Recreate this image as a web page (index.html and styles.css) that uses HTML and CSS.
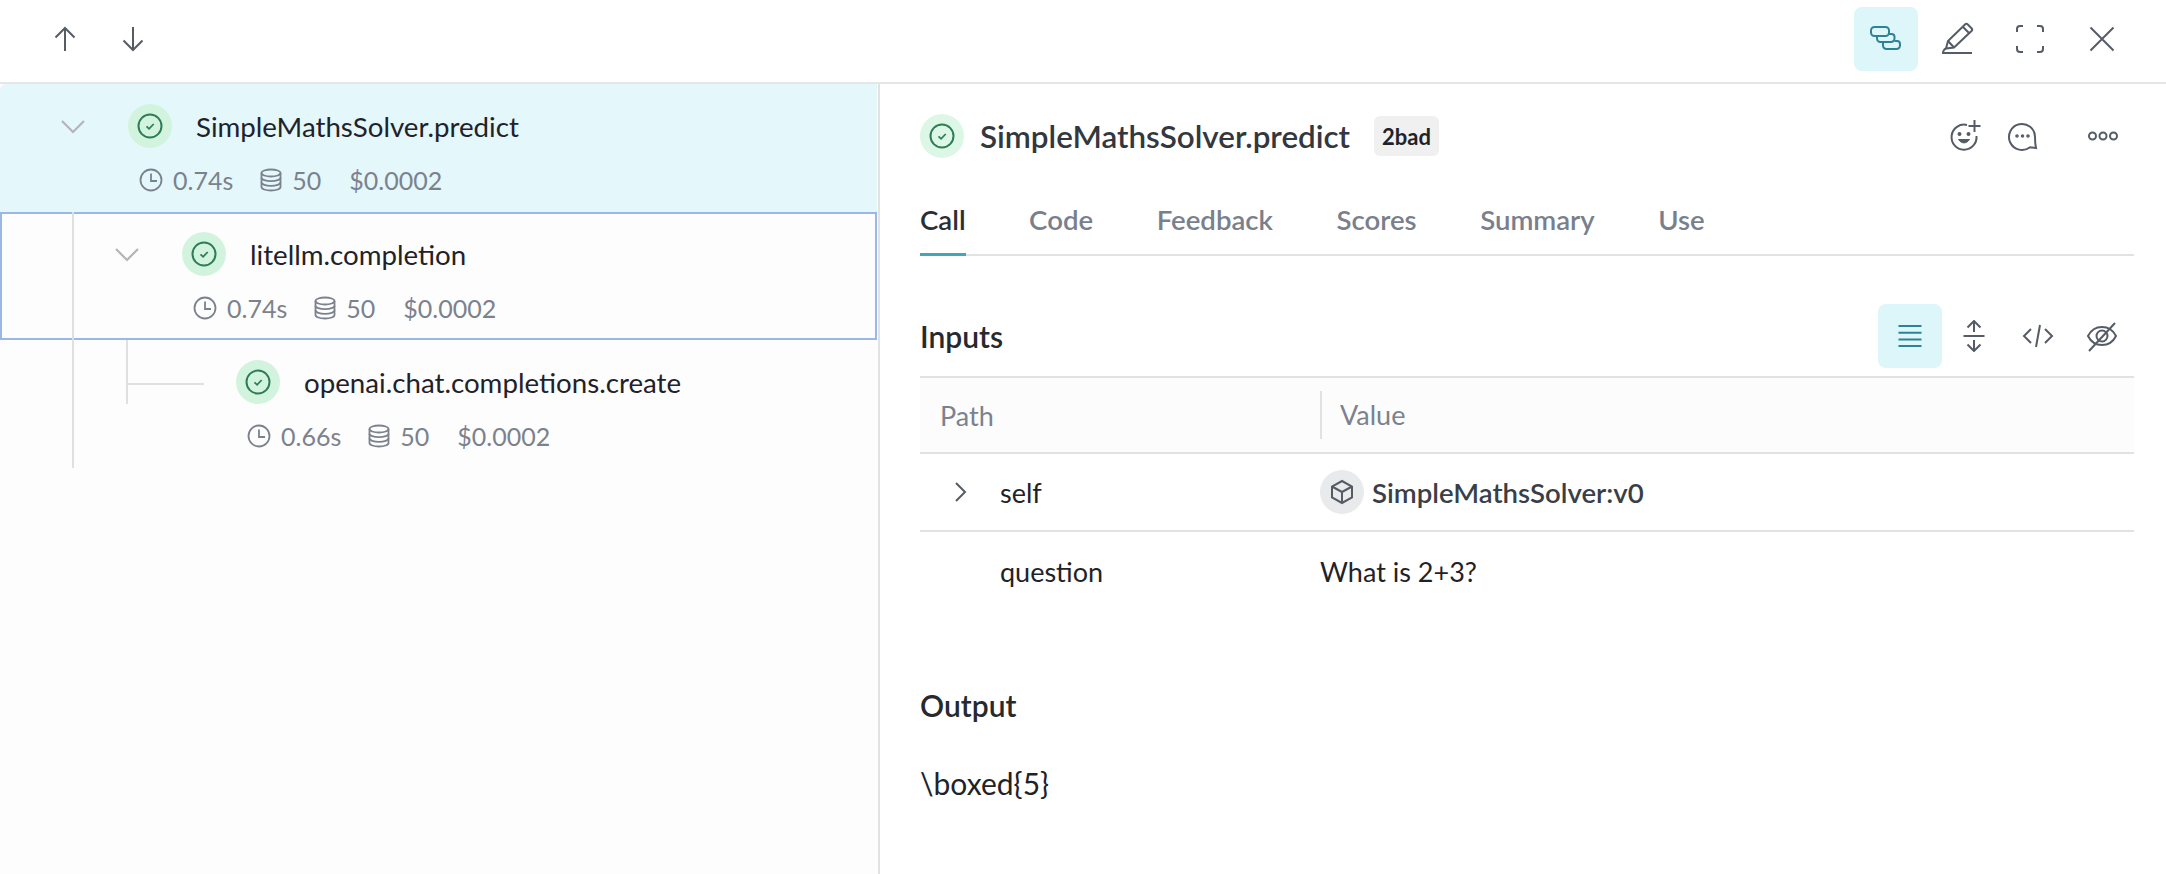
FILE: index.html
```html
<!DOCTYPE html>
<html lang="en">
<head>
    <meta charset="UTF-8">
    <title>SimpleMathsSolver.predict</title>
    <link rel="stylesheet" href="styles.css">
</head>
<body>
    <svg class="defs" width="0" height="0">
        <symbol id="status" viewBox="0 0 44 44">
            <circle cx="22" cy="22" r="11.5" fill="none" stroke="#2f7d57" stroke-width="2"/>
            <path d="M18.5 22.3l2.6 2.5 4.6-4.8" fill="none" stroke="#2f7d57" stroke-width="1.8"/>
        </symbol>
        <symbol id="clock" viewBox="0 0 24 24">
            <circle cx="12" cy="12" r="10.5" fill="none" stroke="currentColor" stroke-width="1.8"/>
            <path d="M12 5.5V13h6" fill="none" stroke="currentColor" stroke-width="1.8"/>
        </symbol>
        <symbol id="db" viewBox="0 0 24 24">
            <g fill="none" stroke="currentColor" stroke-width="1.8">
                <ellipse cx="12" cy="5" rx="9.5" ry="3.5"/>
                <path d="M2.5 5v14c0 2 4.300 3.500 9.500 3.500s9.500-1.500 9.500-3.500V5"/>
                <path d="M2.500 9.700c0 2 4.300 3.500 9.500 3.500s9.500-1.500 9.500-3.500M2.500 14.300c0 2 4.300 3.500 9.500 3.500s9.500-1.500 9.500-3.500"/>
            </g>
        </symbol>
        <symbol id="chevron-down" viewBox="0 0 32 32">
            <path d="M5 11l11 11 11-11" fill="none" stroke="#b3b5b9" stroke-width="2.200"/>
        </symbol>
    </svg>

    <!-- barra superior -->
    <header class="topbar">
        <div class="btn-group nav-group">
            <button class="icon-btn">
                <svg width="32" height="32" viewBox="0 0 32 32" class="ico"><path d="M16 28V5M6.500 14.500L16 5l9.500 9.500"/></svg>
            </button>
            <button class="icon-btn">
                <svg width="32" height="32" viewBox="0 0 32 32" class="ico"><path d="M16 4v23M6.500 17.500L16 27l9.500-9.500"/></svg>
            </button>
        </div>
        <div class="btn-group view-group">
            <button class="icon-btn active">
                <svg width="40" height="40" viewBox="0 0 40 40" class="ico">
                    <rect x="5" y="8" width="18" height="9" rx="3.500"/>
                    <path d="M11 17v2.500a3.500 3.500 0 0 0 3.500 3.500H25a3.500 3.500 0 0 0 3.500-3.500V18a3 3 0 0 0-3-3H23"/>
                    <path d="M17 23v3.500a3.500 3.500 0 0 0 3.500 3.500h10a3.500 3.500 0 0 0 3.500-3.500V25a3 3 0 0 0-3-3h-2.500"/>
                </svg>
            </button>
            <button class="icon-btn">
                <svg width="40" height="40" viewBox="0 0 40 40" class="ico">
                    <path d="M8 29.500l2-7.500L27 5.500a2 2 0 0 1 2.800 0l3.700 3.700a2 2 0 0 1 0 2.800L16 28.500z"/>
                    <path d="M10 22l6 6.500M25 8l6.500 6.500"/>
                    <path d="M8 29.500c-2 .5-3 3-3 4.500h29"/>
                </svg>
            </button>
            <button class="icon-btn">
                <svg width="40" height="40" viewBox="0 0 40 40" class="ico">
                    <path d="M7 13V10a3 3 0 0 1 3-3h3M27 7h3a3 3 0 0 1 3 3v3M33 27v3a3 3 0 0 1-3 3h-3M13 33h-3a3 3 0 0 1-3-3v-3"/>
                </svg>
            </button>
            <button class="icon-btn">
                <svg width="40" height="40" viewBox="0 0 40 40" class="ico"><path d="M8.500 8.500l23 23M31.500 8.500l-23 23"/></svg>
            </button>
        </div>
    </header>

    <main class="layout">
        <!-- arvore de chamadas -->
        <section class="tree">
            <div class="row selected depth-0">
                <div class="row-head">
                    <svg class="chevron" width="32" height="32"><use href="#chevron-down"/></svg>
                    <svg class="status" width="44" height="44"><use href="#status"/></svg>
                    <span class="op-name">SimpleMathsSolver.predict</span>
                </div>
                <div class="row-meta">
                    <svg width="24" height="24"><use href="#clock"/></svg><span class="m-time">0.74s</span>
                    <svg width="24" height="24"><use href="#db"/></svg><span class="m-tok">50</span>
                    <span>$0.0002</span>
                </div>
            </div>
            <div class="row focused depth-1">
                <i class="line line-a"></i>
                <div class="row-head">
                    <svg class="chevron" width="32" height="32"><use href="#chevron-down"/></svg>
                    <svg class="status" width="44" height="44"><use href="#status"/></svg>
                    <span class="op-name">litellm.completion</span>
                </div>
                <div class="row-meta">
                    <svg width="24" height="24"><use href="#clock"/></svg><span class="m-time">0.74s</span>
                    <svg width="24" height="24"><use href="#db"/></svg><span class="m-tok">50</span>
                    <span>$0.0002</span>
                </div>
            </div>
            <div class="row depth-2">
                <i class="line line-a"></i>
                <i class="line line-b"></i>
                <i class="line line-c"></i>
                <div class="row-head">
                    <span class="chevron"></span>
                    <svg class="status" width="44" height="44"><use href="#status"/></svg>
                    <span class="op-name">openai.chat.completions.create</span>
                </div>
                <div class="row-meta">
                    <svg width="24" height="24"><use href="#clock"/></svg><span class="m-time">0.66s</span>
                    <svg width="24" height="24"><use href="#db"/></svg><span class="m-tok">50</span>
                    <span>$0.0002</span>
                </div>
            </div>
        </section>

        <!-- detalhes -->
        <section class="detail">
            <div class="title-row">
                <svg class="status soft" width="44" height="44"><use href="#status"/></svg>
                <h1 class="title">SimpleMathsSolver.predict</h1>
                <span class="badge">2bad</span>
                <div class="title-actions">
                    <svg width="36" height="36" viewBox="0 0 36 36" class="ico">
                        <path d="M20 7A12.500 12.500 0 1 0 29.500 18"/>
                        <path d="M27.500 2v12M21.500 8h12"/>
                        <path d="M11.500 21.500c3 4.500 8 4.500 11 0z" fill="#565c66" stroke-width="1"/>
                        <circle cx="12.500" cy="16" r="1" fill="#565c66"/>
                        <circle cx="21.500" cy="16" r="1" fill="#565c66"/>
                    </svg>
                    <svg width="36" height="36" viewBox="0 0 36 36" class="ico">
                        <path d="M31 30l-6-.8A13 13 0 1 1 30 19c0 3 0 7 1 11z"/>
                        <circle cx="12" cy="18" r=".8"/><circle cx="17.500" cy="18" r=".8"/><circle cx="23" cy="18" r=".8"/>
                    </svg>
                    <svg class="dots ico" width="36" height="36" viewBox="0 0 36 36" stroke-width="2.400">
                        <circle cx="7.500" cy="18" r="3.500"/><circle cx="18" cy="18" r="3.500"/><circle cx="28.500" cy="18" r="3.500"/>
                    </svg>
                </div>
            </div>

            <nav class="tabs">
                <a class="tab current">Call</a>
                <a class="tab">Code</a>
                <a class="tab">Feedback</a>
                <a class="tab">Scores</a>
                <a class="tab">Summary</a>
                <a class="tab">Use</a>
            </nav>

            <div class="section-head">
                <h2 class="section-title">Inputs</h2>
                <div class="btn-group">
                    <button class="icon-btn active">
                        <svg width="32" height="32" viewBox="0 0 32 32" class="ico"><path d="M4.500 6h23M4.500 12.700h23M4.500 19.400h23M4.500 26h23"/></svg>
                    </button>
                    <button class="icon-btn">
                        <svg width="32" height="32" viewBox="0 0 32 32" class="ico"><path d="M16 1v11M9.500 7.500L16 1l6.500 6.500M5.500 16h21M16 20v11M9.500 24.500L16 31l6.500-6.500"/></svg>
                    </button>
                    <button class="icon-btn">
                        <svg width="32" height="32" viewBox="0 0 32 32" class="ico"><path d="M9 9l-7 7 7 7M23 9l7 7-7 7M18 5l-4 22"/></svg>
                    </button>
                    <button class="icon-btn">
                        <svg width="32" height="32" viewBox="0 0 32 32" class="ico">
                            <path d="M2 16c3-6 8-9 14-9s11 3 14 9c-3 6-8 9-14 9S5 22 2 16z"/>
                            <circle cx="16" cy="16" r="5.500"/>
                            <path d="M3 31L29 3"/>
                        </svg>
                    </button>
                </div>
            </div>

            <div class="table">
                <div class="t-head">
                    <div class="th th-path">Path</div>
                    <div class="th th-value">Value</div>
                </div>
                <div class="t-row">
                    <div class="td-path">
                        <svg class="expander" width="24" height="24" viewBox="0 0 24 24"><path d="M8 3l9 9-9 9" fill="none" stroke="#565c66" stroke-width="2"/></svg>
                        <span>self</span>
                    </div>
                    <div class="td-value">
                        <span class="obj-ico">
                            <svg width="28" height="28" viewBox="0 0 28 28" class="ico">
                                <path d="M14 3l10 5.500v11L14 25 4 19.500v-11z"/><path d="M4 8.500L14 14l10-5.500M14 14v11"/>
                            </svg>
                        </span>
                        <strong class="obj-name">SimpleMathsSolver:v0</strong>
                    </div>
                </div>
                <div class="t-row last">
                    <div class="td-path"><span class="expander"></span><span>question</span></div>
                    <div class="td-value">What is 2+3?</div>
                </div>
            </div>

            <h2 class="section-title output-title">Output</h2>
            <p class="output">\boxed{5}</p>
        </section>
    </main>
</body>
</html>
```
FILE: styles.css
```css
* {
    box-sizing: border-box;
}
html, body {
    margin: 0;
    height: 100%;
}
body {
    font-family: "Lato", "Noto Sans", sans-serif;
    font-size: 27px;
    color: #1f2329;
    background-color: #fff;
    overflow: hidden;
}
.defs {
    position: absolute;
}
.ico {
    fill: none;
    stroke: #565c66;
    stroke-width: 2;
    display: block;
}

/* barra superior */
.topbar {
    height: 84px;
    border-bottom: 2px solid #e6e6e6;
    display: flex;
    justify-content: space-between;
    align-items: flex-start;
    padding: 7px 32px 0 31px;
}
.btn-group {
    display: flex;
}
.view-group {
    gap: 8px;
}
.icon-btn {
    width: 64px;
    height: 64px;
    border: none;
    border-radius: 8px;
    background-color: transparent;
    display: flex;
    align-items: center;
    justify-content: center;
    padding: 0;
}
.nav-group .icon-btn {
    width: 68px;
}
.icon-btn.active {
    background-color: #dcf6f9;
}
.icon-btn.active .ico {
    stroke: #2f8197;
}

.layout {
    display: flex;
    height: 790px;
}

/* arvore */
.tree {
    width: 880px;
    height: 100%;
    padding-right: 1px;
    background-color: #fdfdfd;
    border-right: 2px solid #e2e2e2;
}
.row {
    position: relative;
    height: 128px;
    padding-top: 20px;
}
.row.selected {
    background-color: #e4f7fb;
    border-top-left-radius: 6px;
}
.row.focused {
    box-shadow: inset 0 0 0 2px #9ab8e6;
}
.depth-0 { padding-left: 45px; }
.depth-1 { padding-left: 99px; }
.depth-2 { padding-left: 153px; }
.row-head {
    display: flex;
    align-items: center;
    height: 44px;
}
.chevron {
    width: 32px;
    margin-left: 12px;
    flex: none;
}
.status {
    flex: none;
    margin-left: 39px;
    border-radius: 50%;
    background-color: #d2f4df;
}
.status.soft {
    margin-left: 0;
    background-color: #dcf7e6;
}
.op-name {
    margin-left: 24px;
    font-size: 27.7px;
}
.row-meta {
    display: flex;
    align-items: center;
    margin-top: 15px;
    padding-left: 94px;
    color: #7b828e;
    font-size: 25px;
    line-height: 34px;
}
.m-time {
    margin-left: 10px;
    margin-right: 26px;
}
.m-tok {
    margin-left: 9px;
    margin-right: 28px;
}
.line {
    position: absolute;
    background-color: #e0e0e0;
}
.line-a {
    left: 72px;
    top: 0;
    width: 2px;
    height: 128px;
}
.line-b {
    left: 126px;
    top: 0;
    width: 2px;
    height: 64px;
}
.line-c {
    left: 127px;
    top: 43px;
    width: 77px;
    height: 2px;
}

/* detalhes */
.detail {
    flex: 1;
    padding: 30px 32px 0 40px;
    min-width: 0;
}
.title-row {
    display: flex;
    align-items: center;
    height: 44px;
}
.title {
    margin: 0 0 0 16px;
    font-size: 31.4px;
    font-weight: 600;
    color: #33373e;
}
.badge {
    margin-left: 24px;
    height: 40px;
    padding: 0 8px;
    display: flex;
    align-items: center;
    border-radius: 6px;
    background-color: #f0f0f0;
    font-size: 22px;
    font-weight: 700;
}
.title-actions {
    margin-left: auto;
    display: flex;
    align-items: center;
    gap: 22px;
    padding-right: 13px;
}
.title-actions .dots {
    margin-left: 22px;
}
.tabs {
    display: flex;
    gap: 63.5px;
    margin-top: 42px;
    height: 56px;
    border-bottom: 2px solid #e2e2e2;
}
.tab {
    height: 56px;
    font-size: 27.6px;
    font-weight: 600;
    color: #79808c;
    line-height: 40px;
}
.tab.current {
    color: #2a2f36;
    border-bottom: 3px solid #3fa7b8;
}
.section-head {
    display: flex;
    align-items: center;
    justify-content: space-between;
    margin-top: 48px;
    height: 64px;
}
.section-title {
    margin: 0;
    font-size: 30px;
    font-weight: 600;
    color: #26292e;
}
.table {
    margin-top: 8px;
    border-top: 2px solid #e2e2e2;
}
.t-head {
    display: grid;
    grid-template-columns: 400px 1fr;
    height: 76px;
    align-items: center;
    background-color: #fcfcfc;
    border-bottom: 2px solid #e2e2e2;
    color: #7b828e;
}
.th-path {
    padding-left: 20px;
}
.th-value {
    padding-left: 18px;
    border-left: 2px solid #e2e2e2;
    height: 48px;
    line-height: 48px;
}
.t-row {
    display: grid;
    grid-template-columns: 400px 1fr;
    height: 78px;
    align-items: center;
    border-bottom: 2px solid #e2e2e2;
}
.t-row.last {
    border-bottom: none;
}
.td-path {
    display: flex;
    align-items: center;
}
.expander {
    width: 24px;
    height: 24px;
    margin-left: 28px;
    margin-right: 28px;
}
.td-value {
    display: flex;
    align-items: center;
}
.obj-ico {
    width: 44px;
    height: 44px;
    border-radius: 50%;
    background-color: #e9eaec;
    display: flex;
    align-items: center;
    justify-content: center;
}
.obj-name {
    margin-left: 8px;
    font-size: 27.6px;
    font-weight: 600;
    color: #3a3f47;
}
.output-title {
    margin-top: 77px;
}
.output {
    margin: 42px 0 0;
    font-size: 30px;
}
```
